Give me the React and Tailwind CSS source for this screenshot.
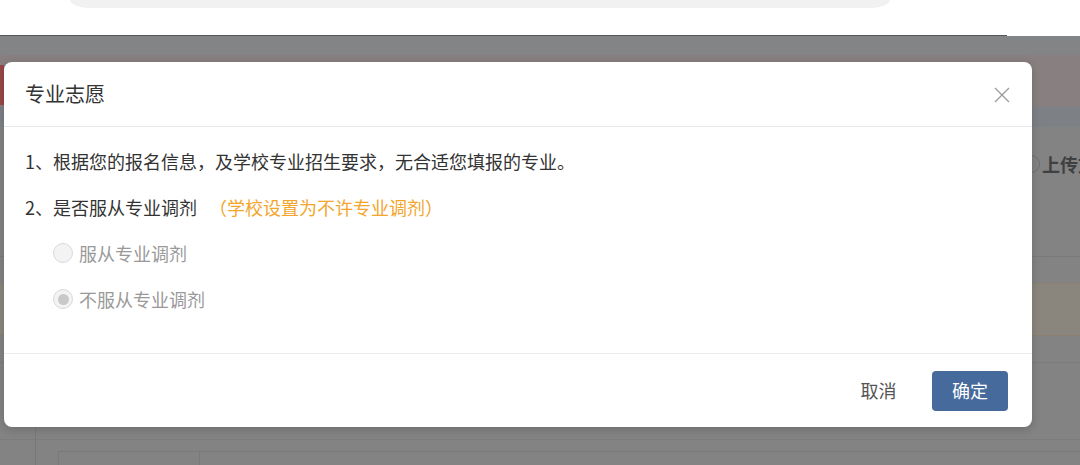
import React from 'react';

const Radio = ({ checked, label }) => (
  <label className="flex items-center h-[46px] pl-[49px]">
    <span className="w-[20px] h-[20px] rounded-full border border-[#d9d9d9] bg-[#f3f3f3] flex items-center justify-center">
      {checked && <span className="w-[11px] h-[11px] rounded-full bg-[#c9c9c9]" />}
    </span>
    <span className="ml-[6px] text-[18px] leading-[24px] text-[#999]">{label}</span>
  </label>
);

const App = () => {
  return (
    <div className="relative w-[1080px] h-[465px] overflow-hidden bg-white font-['Noto_Sans_CJK_SC','Noto_Sans',sans-serif]">
      {/* browser chrome */}
      <div className="h-[35px] bg-white">
        <div className="ml-[70px] w-[820px] h-[8px] bg-[#f1f1f1] rounded-bl-[22px_8px] rounded-br-[22px_8px]" />
      </div>
      <div className="h-[1px] w-[1007px] bg-[#52575c]" />

      {/* dimmed page behind the mask */}
      <div className="h-[429px] bg-[#838383]">
        <div className="h-[19px] bg-[#838485]" />
        <div className="h-[52px] bg-[#887f80] flex">
          <div className="w-[4px] mt-[10px] h-[40px] bg-[#9a4747]" />
        </div>
        <div className="h-[20px] bg-[#7d8085]" />
        <div className="h-[129px] flex justify-end items-start pt-[25px]">
          <div className="w-[60px] flex items-center gap-[2px] overflow-hidden">
            <span className="shrink-0 w-[18px] h-[18px] ml-[2px] rounded-full border border-[#6f6f6f]" />
            <span className="shrink-0 text-[18px] font-bold leading-[24px] text-[#404040]">上传文件</span>
          </div>
        </div>
        <div className="h-[1px] bg-[#7a7a7a]" />
        <div className="h-[26px]" />
        <div className="h-[1px] bg-[#8b806f]" />
        <div className="h-[51px] bg-[#8a867e]" />
        <div className="h-[1px] bg-[#8b806f]" />
        <div className="h-[26px]" />
        <div className="h-[1px] bg-[#7c7c7c]" />
        <div className="h-[76px] flex">
          <div className="w-[36px] mt-[64px] border-r border-[#787878]" />
        </div>
        <div className="h-[1px] bg-[#7c7c7c]" />
        <div className="flex h-[30px]">
          <div className="w-[36px] border-r border-[#787878]" />
          <div className="ml-[22px] w-[142px] border-l border-r border-t border-[#797979] mt-[11px]" />
          <div className="flex-1 border-t border-[#797979] mt-[11px]" />
        </div>
      </div>

      {/* modal */}
      <div className="absolute left-[4px] top-[62px] w-[1028px] h-[365px] bg-white rounded-[8px] shadow-[0_2px_10px_rgba(0,0,0,0.18)] flex flex-col">
        <div className="h-[65px] flex items-center justify-between pl-[21px] pr-[22px] border-b border-[#e8e8e8]">
          <h2 className="text-[20px] leading-[26px] text-[#333]">专业志愿</h2>
          <svg width="16" height="16" viewBox="0 0 16 16" className="mt-[1px]">
            <path d="M1 1L15 15M15 1L1 15" stroke="#9a9a9a" strokeWidth="1.3" fill="none" />
          </svg>
        </div>

        <div className="pt-[11px] pb-[31px] border-b border-[#ececec]">
          <div className="h-[46px] flex items-center pl-[21px] text-[18px] leading-[24px] text-[#333]">
            1、根据您的报名信息，及学校专业招生要求，无合适您填报的专业。
          </div>
          <div className="h-[46px] flex items-center pl-[21px] text-[18px] leading-[24px] text-[#333]">
            <span>2、是否服从专业调剂</span>
            <span className="ml-[12px] text-[#f3a52c]">（学校设置为不许专业调剂）</span>
          </div>
          <Radio label="服从专业调剂" />
          <Radio checked label="不服从专业调剂" />
        </div>

        <div className="flex-1 flex items-center justify-end pr-[24px] gap-[15px]">
          <button className="w-[77px] h-[40px] text-[18px] text-[#555]">取消</button>
          <button className="w-[76px] h-[40px] rounded-[4px] bg-[#476a9c] text-[18px] text-white">确定</button>
        </div>
      </div>
    </div>
  );
};

export default App;
